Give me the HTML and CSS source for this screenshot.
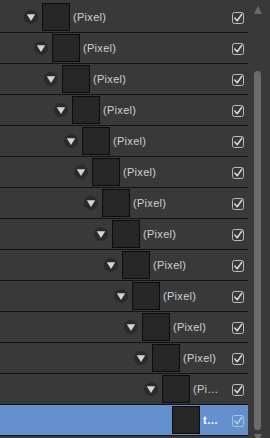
FILE: index.html
```html
<!DOCTYPE html>
<html>
<head>
<meta charset="utf-8">
<link rel="stylesheet" href="styles.css">
</head>
<body>
<div class="panel">
  <div class="list">
    <div class="row lv0"><span class="exp"><svg viewBox="0 0 14 14" width="14" height="14"><polygon points="2.8,4.2 11.2,4.2 7,11"/></svg></span><span class="thumb"></span><span class="name">(Pixel)</span><svg class="chk" viewBox="0 0 12 12" width="12" height="12"><rect x="0.5" y="0.5" width="11" height="11" rx="2"/><polyline points="2.8,6 5.2,8.8 9.8,2.2"/></svg></div>
    <div class="row lv1"><span class="exp"><svg viewBox="0 0 14 14" width="14" height="14"><polygon points="2.8,4.2 11.2,4.2 7,11"/></svg></span><span class="thumb"></span><span class="name">(Pixel)</span><svg class="chk" viewBox="0 0 12 12" width="12" height="12"><rect x="0.5" y="0.5" width="11" height="11" rx="2"/><polyline points="2.8,6 5.2,8.8 9.8,2.2"/></svg></div>
    <div class="row lv2"><span class="exp"><svg viewBox="0 0 14 14" width="14" height="14"><polygon points="2.8,4.2 11.2,4.2 7,11"/></svg></span><span class="thumb"></span><span class="name">(Pixel)</span><svg class="chk" viewBox="0 0 12 12" width="12" height="12"><rect x="0.5" y="0.5" width="11" height="11" rx="2"/><polyline points="2.8,6 5.2,8.8 9.8,2.2"/></svg></div>
    <div class="row lv3"><span class="exp"><svg viewBox="0 0 14 14" width="14" height="14"><polygon points="2.8,4.2 11.2,4.2 7,11"/></svg></span><span class="thumb"></span><span class="name">(Pixel)</span><svg class="chk" viewBox="0 0 12 12" width="12" height="12"><rect x="0.5" y="0.5" width="11" height="11" rx="2"/><polyline points="2.8,6 5.2,8.8 9.8,2.2"/></svg></div>
    <div class="row lv4"><span class="exp"><svg viewBox="0 0 14 14" width="14" height="14"><polygon points="2.8,4.2 11.2,4.2 7,11"/></svg></span><span class="thumb"></span><span class="name">(Pixel)</span><svg class="chk" viewBox="0 0 12 12" width="12" height="12"><rect x="0.5" y="0.5" width="11" height="11" rx="2"/><polyline points="2.8,6 5.2,8.8 9.8,2.2"/></svg></div>
    <div class="row lv5"><span class="exp"><svg viewBox="0 0 14 14" width="14" height="14"><polygon points="2.8,4.2 11.2,4.2 7,11"/></svg></span><span class="thumb"></span><span class="name">(Pixel)</span><svg class="chk" viewBox="0 0 12 12" width="12" height="12"><rect x="0.5" y="0.5" width="11" height="11" rx="2"/><polyline points="2.8,6 5.2,8.8 9.8,2.2"/></svg></div>
    <div class="row lv6"><span class="exp"><svg viewBox="0 0 14 14" width="14" height="14"><polygon points="2.8,4.2 11.2,4.2 7,11"/></svg></span><span class="thumb"></span><span class="name">(Pixel)</span><svg class="chk" viewBox="0 0 12 12" width="12" height="12"><rect x="0.5" y="0.5" width="11" height="11" rx="2"/><polyline points="2.8,6 5.2,8.8 9.8,2.2"/></svg></div>
    <div class="row lv7"><span class="exp"><svg viewBox="0 0 14 14" width="14" height="14"><polygon points="2.8,4.2 11.2,4.2 7,11"/></svg></span><span class="thumb"></span><span class="name">(Pixel)</span><svg class="chk" viewBox="0 0 12 12" width="12" height="12"><rect x="0.5" y="0.5" width="11" height="11" rx="2"/><polyline points="2.8,6 5.2,8.8 9.8,2.2"/></svg></div>
    <div class="row lv8"><span class="exp"><svg viewBox="0 0 14 14" width="14" height="14"><polygon points="2.8,4.2 11.2,4.2 7,11"/></svg></span><span class="thumb"></span><span class="name">(Pixel)</span><svg class="chk" viewBox="0 0 12 12" width="12" height="12"><rect x="0.5" y="0.5" width="11" height="11" rx="2"/><polyline points="2.8,6 5.2,8.8 9.8,2.2"/></svg></div>
    <div class="row lv9"><span class="exp"><svg viewBox="0 0 14 14" width="14" height="14"><polygon points="2.8,4.2 11.2,4.2 7,11"/></svg></span><span class="thumb"></span><span class="name">(Pixel)</span><svg class="chk" viewBox="0 0 12 12" width="12" height="12"><rect x="0.5" y="0.5" width="11" height="11" rx="2"/><polyline points="2.8,6 5.2,8.8 9.8,2.2"/></svg></div>
    <div class="row lv10"><span class="exp"><svg viewBox="0 0 14 14" width="14" height="14"><polygon points="2.8,4.2 11.2,4.2 7,11"/></svg></span><span class="thumb"></span><span class="name">(Pixel)</span><svg class="chk" viewBox="0 0 12 12" width="12" height="12"><rect x="0.5" y="0.5" width="11" height="11" rx="2"/><polyline points="2.8,6 5.2,8.8 9.8,2.2"/></svg></div>
    <div class="row lv11"><span class="exp"><svg viewBox="0 0 14 14" width="14" height="14"><polygon points="2.8,4.2 11.2,4.2 7,11"/></svg></span><span class="thumb"></span><span class="name">(Pixel)</span><svg class="chk" viewBox="0 0 12 12" width="12" height="12"><rect x="0.5" y="0.5" width="11" height="11" rx="2"/><polyline points="2.8,6 5.2,8.8 9.8,2.2"/></svg></div>
    <div class="row lv12"><span class="exp"><svg viewBox="0 0 14 14" width="14" height="14"><polygon points="2.8,4.2 11.2,4.2 7,11"/></svg></span><span class="thumb"></span><span class="name">(Pixel)</span><svg class="chk" viewBox="0 0 12 12" width="12" height="12"><rect x="0.5" y="0.5" width="11" height="11" rx="2"/><polyline points="2.8,6 5.2,8.8 9.8,2.2"/></svg></div>
    <div class="row lv13 selected"><span class="exp leaf"></span><span class="thumb"></span><span class="name">text layer</span><svg class="chk" viewBox="0 0 12 12" width="12" height="12"><rect x="0.5" y="0.5" width="11" height="11" rx="2"/><polyline points="2.8,6 5.2,8.8 9.8,2.2"/></svg></div>
  </div>
  <div class="scrollbar">
    <svg class="arrow" viewBox="0 0 8 8" width="8" height="8"><polygon points="4,0 8,8 0,8"/></svg>
    <div class="track"><div class="thumbbar"></div></div>
    <svg class="arrow" viewBox="0 0 8 8" width="8" height="8"><polygon points="0,0 8,0 4,8"/></svg>
  </div>
</div>
</body>
</html>
```
FILE: styles.css
```css
html, body {
  margin: 0;
  padding: 0;
  background: #393939;
}
body {
  width: 270px;
  height: 438px;
  overflow: hidden;
  font-family: "Liberation Sans", Arial, sans-serif;
}
.panel {
  display: flex;
  height: 438px;
  background: #393939;
}
.list {
  width: 248px;
  padding-top: 2px;
  display: flex;
  flex-direction: column;
}
.row {
  height: 30px;
  border-bottom: 1px solid #121212;
  display: flex;
  align-items: center;
  padding-left: 24px;
  padding-right: 4px;
  background: #393939;
  flex-shrink: 0;
}
.lv1 { padding-left: 34px; }
.lv2 { padding-left: 44px; }
.lv3 { padding-left: 54px; }
.lv4 { padding-left: 64px; }
.lv5 { padding-left: 74px; }
.lv6 { padding-left: 84px; }
.lv7 { padding-left: 94px; }
.lv8 { padding-left: 104px; }
.lv9 { padding-left: 114px; }
.lv10 { padding-left: 124px; }
.lv11 { padding-left: 134px; }
.lv12 { padding-left: 144px; }
.lv13 { padding-left: 154px; }
.exp {
  width: 14px;
  height: 14px;
  border-radius: 50%;
  background: #2a2a2a;
  margin-right: 4px;
  flex-shrink: 0;
  display: flex;
}
.exp svg polygon { fill: #d4d4d4; }
.exp.leaf { background: transparent; }
.thumb {
  width: 28px;
  height: 28px;
  box-sizing: border-box;
  border: 1px solid #0c0c0c;
  background: #262626;
  flex-shrink: 0;
}
.name {
  flex: 1;
  min-width: 0;
  margin-left: 3px;
  font-size: 11px;
  letter-spacing: 0.3px;
  color: #cdd0d4;
  white-space: nowrap;
  overflow: hidden;
  text-overflow: ellipsis;
  margin-right: 13px;
}
.chk {
  flex-shrink: 0;
  margin-top: 1px;
}
.chk rect {
  fill: none;
  stroke: #bcbcbc;
  stroke-width: 1;
}
.chk polyline {
  fill: none;
  stroke: #d6d6d6;
  stroke-width: 1.5;
  stroke-linecap: round;
  stroke-linejoin: round;
}
.selected {
  background: #6491cd;
}
.selected .name {
  color: #ffffff;
  font-weight: bold;
}
.selected .chk rect { stroke: #a9c1e3; }
.selected .chk polyline { stroke: #b9cde9; }
.scrollbar {
  width: 22px;
  display: flex;
  flex-direction: column;
  align-items: flex-start;
  padding-left: 6px;
  box-sizing: border-box;
}
.arrow {
  flex-shrink: 0;
}
.arrow polygon { fill: #6a6a6a; }
.scrollbar .arrow:first-child { margin-top: 6px; }
.track {
  flex: 1;
  display: flex;
  flex-direction: column;
  padding-top: 57px;
  padding-bottom: 4px;
}
.thumbbar {
  flex: 1;
  width: 7px;
  background: #6b6b6b;
  border-radius: 4px;
}
.scrollbar .arrow:last-child { margin-bottom: -4px; }
```
